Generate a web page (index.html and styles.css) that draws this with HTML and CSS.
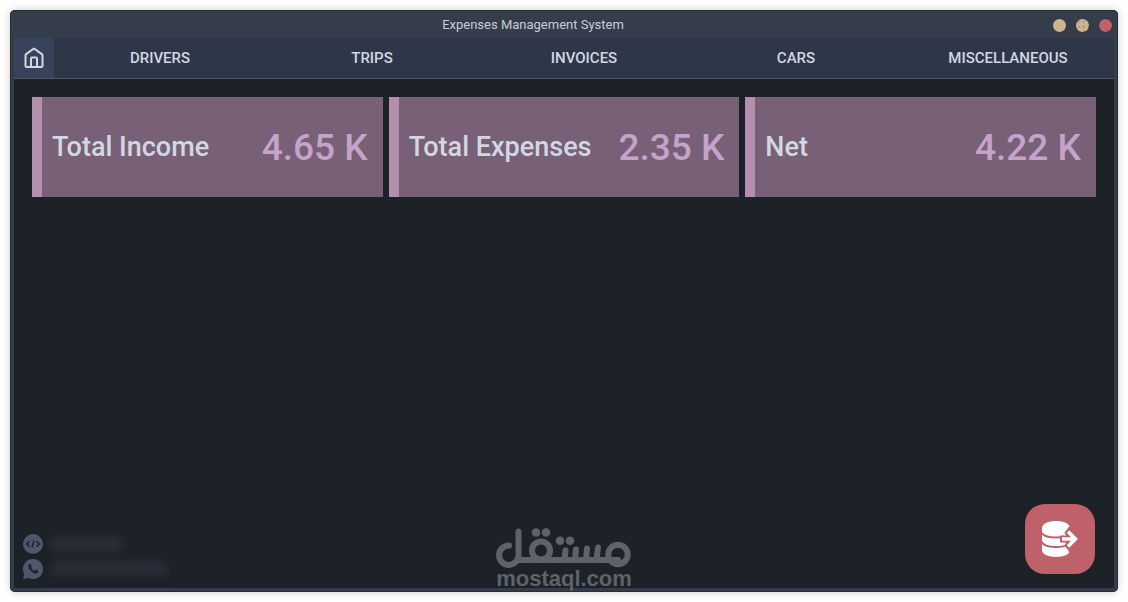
FILE: index.html
```html
<!DOCTYPE html>
<html lang="en">
<head>
<meta charset="utf-8">
<meta name="viewport" content="width=device-width, initial-scale=1">
<title>Expenses Management System</title>
<link rel="stylesheet" href="styles.css">
</head>
<body>
<div class="window">
  <header class="titlebar">
    <h1 class="title">Expenses Management System</h1>
    <div class="controls">
      <button class="control" aria-label="Minimize"></button>
      <button class="control control-dotted" aria-label="Maximize"></button>
      <button class="control control-close" aria-label="Close"></button>
    </div>
  </header>
  <nav class="nav">
    <a class="home" href="#" aria-label="Home">
      <svg width="20" height="22" viewBox="0 0 20 22" fill="none" stroke="currentColor" stroke-width="2" stroke-linejoin="round">
        <path d="M1.5 8.4 Q1.5 7.6 2.1 7.1 L10 1.5 L17.9 7.1 Q18.5 7.6 18.5 8.4 V18.5 Q18.5 20 17 20 H3 Q1.5 20 1.5 18.5 Z"/>
        <path d="M7 20 V11.5 Q7 10.5 8 10.5 H12 Q13 10.5 13 11.5 V20"/>
      </svg>
    </a>
    <a class="tab" href="#">DRIVERS</a>
    <a class="tab" href="#">TRIPS</a>
    <a class="tab" href="#">INVOICES</a>
    <a class="tab" href="#">CARS</a>
    <a class="tab" href="#">MISCELLANEOUS</a>
  </nav>
  <main class="main">
    <section class="cards">
      <article class="card"><h2 class="label">Total Income</h2><p class="value">4.65 K</p></article>
      <article class="card"><h2 class="label">Total Expenses</h2><p class="value">2.35 K</p></article>
      <article class="card"><h2 class="label">Net</h2><p class="value">4.22 K</p></article>
    </section>
    <footer class="footer">
      <div class="contacts">
        <div class="contact">
          <svg width="20" height="20" viewBox="0 0 20 20">
            <circle cx="10" cy="10" r="10" fill="#4f586b"/>
            <path d="M6.5 7.2 L3.7 10 L6.5 12.8 M13.5 7.2 L16.3 10 L13.5 12.8 M11 6.5 L9 13.5" fill="none" stroke="#1d2128" stroke-width="1.5"/>
          </svg>
          <span class="hidden-text"></span>
        </div>
        <div class="contact">
          <svg width="20" height="20" viewBox="0 0 20 20">
            <path d="M10 0 A10 10 0 1 1 5.2 18.7 L0 20 L1.3 15 A10 10 0 0 1 10 0 Z" fill="#4f586b"/>
            <path d="M6.7 5 Q7.6 4.7 8 5.5 L8.7 7.2 Q8.9 7.7 7.9 8.7 Q9.1 11 11.5 12 L12.5 10.9 Q12.8 10.6 13.3 10.8 L15 11.7 Q15.5 12 15.2 12.9 Q14.6 14.5 12.7 14.5 Q10.3 14.3 7.6 11.8 Q5.2 9.3 5.2 7.3 Q5.3 5.7 6.7 5 Z" fill="#1d2128"/>
          </svg>
          <span class="hidden-text hidden-text-long"></span>
        </div>
      </div>
      <button class="export" aria-label="Export data">
        <svg width="36" height="36" viewBox="0 0 36 36">
          <path d="M0 7 C0 -2.3 28 -2.3 28 7 V29 C28 38.3 0 38.3 0 29 Z" fill="#fff"/>
          <path d="M-1 11 C1 15.500 8 16.500 14 16.500 C17 16.500 20 16.200 22 15.500 M-1 20 C1 25 8 26 14 26 C19 26 23 25.500 26 23.500" fill="none" stroke="#bf616a" stroke-width="2"/>
          <path d="M18 14.500 H24 L22.500 11.500 L27.500 5 L38 14 V24 L28 32 L22.500 25 L24 21.500 H18 Z" fill="#bf616a"/>
          <path d="M22.500 25.500 L26.500 29.500 L25 31 L22 28 Z" fill="#fff"/>
          <path d="M20 16.2 H29 L24.8 11.8 L27.2 9.3 L36 18 L27.2 26.8 L24.8 24.3 L29 19.8 H20 Z" fill="#fff"/>
        </svg>
      </button>
    </footer>
  </main>
  <div class="watermark">
    <svg width="136" height="40" viewBox="0 0 136 40" fill="none" stroke="currentColor" stroke-width="6" stroke-linecap="round" role="img" aria-label="مستقل">
      <path d="M13 17.500 A9.700 9.700 0 1 0 22.500 27 V3.500 M23 32 H122"/>
      <circle cx="45" cy="22.500" r="9"/>
      <path d="M69.500 22.500 L68.500 32 M80 21.500 L79 32 M91 20.500 L90 32 M102 19.500 L100.500 32"/>
      <circle cx="122" cy="26.500" r="9.700"/>
      <g fill="currentColor" stroke="none">
        <circle cx="40" cy="4.500" r="4.300"/><circle cx="50" cy="4.500" r="4.300"/>
        <circle cx="64" cy="12.800" r="4.300"/><circle cx="74" cy="12.800" r="4.300"/>
      </g>
    </svg>
    <span>mostaql.com</span>
  </div>
</div>
</body>
</html>
```
FILE: styles.css
```css
* { box-sizing: border-box; }
body {
  margin: 0;
  padding: 10px;
  min-height: 100vh;
  display: flex;
  background: #fff;
  font-family: Roboto, "Liberation Sans", sans-serif;
  color: #d3d7e3;
}
button { border: 0; padding: 0; }
h1, h2, p { margin: 0; font-weight: 500; }
a { color: inherit; text-decoration: none; }
.window {
  position: relative;
  flex: 1;
  display: flex;
  flex-direction: column;
  border-radius: 5px;
  padding: 0 4px 4px;
  background: #353d4a;
  box-shadow: inset 0 0 0 1px #262d38, 0 0 8px rgba(0, 0, 0, 0.2);
}
.titlebar { display: flex; align-items: center; height: 28px; }
.title {
  flex: 1;
  text-align: center;
  font-size: 13px;
  font-weight: 400;
  color: #c8ccd6;
}
.controls { display: flex; gap: 8px; padding: 2px 1px 0 0; }
.control {
  width: 15px;
  height: 15px;
  border: 1px solid #282c39;
  border-radius: 50%;
  background: #ccb48e;
}
.control-dotted {
  background: radial-gradient(circle, #8d958f 1px, transparent 1px) 0 0 / 5px 5px, #ccb48e;
}
.control-close { background: #bf616a; }
.nav {
  display: flex;
  height: 41px;
  background: #2e3748;
  border-bottom: 1px solid #535961;
  font-size: 15px;
  font-weight: 500;
}
.home {
  width: 40px;
  display: flex;
  align-items: center;
  justify-content: center;
  background: #36435a;
}
.tab { flex: 1 1 0; display: flex; align-items: center; justify-content: center; }
.main {
  flex: 1;
  display: flex;
  flex-direction: column;
  justify-content: space-between;
  padding: 18px 18px 14px;
  background: #1d2128;
}
.cards { display: grid; grid-template-columns: repeat(3, 1fr); gap: 6px; }
.card {
  display: flex;
  align-items: center;
  justify-content: space-between;
  height: 100px;
  padding: 0 15px 0 10px;
  border-left: 10px solid #b48ead;
  background: #786176;
}
.label { font-size: 27px; line-height: 34px; }
.value { font-size: 37px; color: #c5a3cb; }
.footer { display: flex; justify-content: space-between; align-items: flex-end; }
.contacts {
  display: flex;
  flex-direction: column;
  gap: 5px;
  margin: 0 0 -5px -9px;
}
.contact { display: flex; align-items: center; gap: 8px; }
.hidden-text {
  width: 72px;
  height: 16px;
  border-radius: 6px;
  background: #282d38;
  filter: blur(4px);
}
.hidden-text-long { width: 116px; }
.export {
  display: flex;
  align-items: center;
  justify-content: center;
  width: 70px;
  height: 70px;
  margin-right: 1px;
  border-radius: 20px;
  background: #bf616a;
}
.watermark {
  position: absolute;
  left: 50%;
  bottom: 3px;
  transform: translateX(-50%);
  display: flex;
  flex-direction: column;
  align-items: center;
  color: #5f6368;
  font: bold 22px/21px "Liberation Sans", sans-serif;
}
```
